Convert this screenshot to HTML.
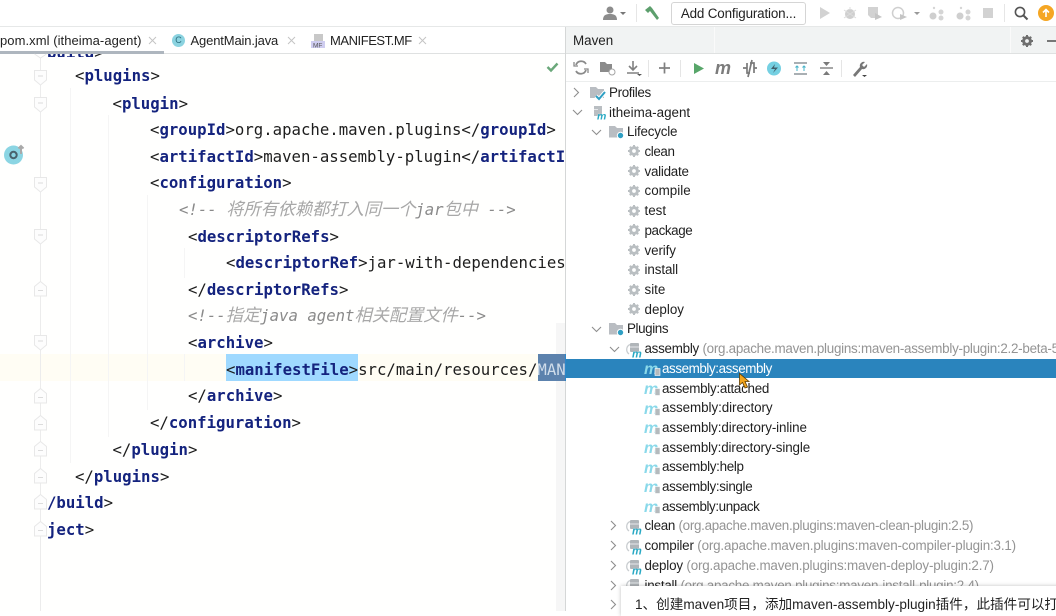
<!DOCTYPE html>
<html><head><meta charset="utf-8">
<style>
html,body{margin:0;padding:0}
body{width:1056px;height:611px;overflow:hidden;position:relative;background:#fff;font-family:"Liberation Sans","Noto Sans CJK SC",sans-serif;color:#222}
.a{position:absolute}
.c{position:absolute;font-family:"DejaVu Sans Mono","Noto Sans CJK SC",monospace;font-size:15.68px;line-height:26px;height:26px;white-space:pre;color:#1d1d1d;width:auto}
.c b{color:#14237e;font-weight:700}
.k{color:#8a8a8a!important;font-style:italic}
.k i{font-size:17.2px;color:#a8a8a8;font-style:italic}
.t{position:absolute;font-size:13.4px;line-height:20px;height:20px;white-space:pre;color:#1f1f1f}
.t span{color:#949494}
.x{position:absolute;font-size:13px;line-height:20px;height:20px;white-space:pre;color:#222}
.g{position:absolute;width:1px;background:#f5f5f5}
svg{position:absolute;overflow:visible}
</style></head><body>
<svg width="0" height="0" style="position:absolute"><defs>
<g id="fo"><path d="M0.5 0.5H12.5V10L6.5 15L0.5 10Z" fill="#fdfdfd" stroke="#e8e8e8"/><path d="M4 6H9" stroke="#dcdcdc"/></g>
<g id="fc"><path d="M0.5 15V5.500L6.500 0.500L12.500 5.500V15Z" fill="#fdfdfd" stroke="#e8e8e8"/><path d="M4 9.500H9" stroke="#dcdcdc"/></g>
<g id="gear"><circle cx="6" cy="6" r="3.400" fill="none" stroke="#babfc2" stroke-width="3"/><path d="M6 0V2.500M6 9.500V12M0 6H2.500M9.500 6H12M1.800 1.800L3.300 3.300M8.700 8.700L10.200 10.200M1.800 10.200L3.300 8.700M8.700 3.300L10.200 1.800" stroke="#babfc2" stroke-width="2"/></g>
<g id="goal"><text x="-1" y="12" font-family="Liberation Sans" font-size="16" font-style="italic" font-weight="700" fill="#8ad9ea">m</text><rect x="10" y="6.500" width="5" height="7" fill="#b4babd" stroke="#fff" stroke-width=".6"/></g>
<g id="plug"><path d="M3 2.500A5.500 5.500 0 0 0 2 12" fill="none" stroke="#c9cdd0" stroke-width="1.300"/><rect x="3" y="1" width="9" height="9" rx="1" fill="#b0b5b9"/><path d="M3 5H12" stroke="#e6e8ea"/><text x="5" y="15.500" font-family="Liberation Sans" font-size="11" font-style="italic" font-weight="700" fill="#29a9c4" stroke="#fff" stroke-width=".3" paint-order="stroke">m</text></g>
<path id="ar" d="M0 0L4.500 4.500L0 9" fill="none" stroke="#8e8e8e" stroke-width="1.100"/>
<path id="dn" d="M0 0L4.500 4.500L9 0" fill="none" stroke="#8e8e8e" stroke-width="1.100"/>
<g id="folder"><path d="M0 1H6L8 3H14V12.500H0Z" fill="#b9bdc2"/><circle cx="11.500" cy="10.500" r="3.200" fill="#2f9fc3" stroke="#fff"/></g>
</defs></svg>

<!-- top bar -->
<div class="a" style="left:0;top:26px;width:1056px;height:1px;background:#e6e8e8"></div>
<div class="a" style="left:0;top:53px;width:566px;height:1px;background:#dfe1e1"></div>
<!-- tabs -->
<div class="x" style="left:0;top:31px;letter-spacing:.06px">pom.xml (itheima-agent)</div>
<svg style="left:148px;top:36px" width="9" height="9"><path d="M1 1L8 8M8 1L1 8" stroke="#c4c4c4"/></svg>
<div class="a" style="left:0;top:51px;width:164px;height:3px;background:#aeb6be"></div>
<div class="a" style="left:172px;top:34px;width:13px;height:13px;border-radius:50%;background:#8bd3e0;color:#2c6f80;font-size:9px;line-height:13px;text-align:center">C</div>
<div class="x" style="left:190.500px;top:31px;letter-spacing:-.14px">AgentMain.java</div>
<svg style="left:287px;top:36px" width="9" height="9"><path d="M1 1L8 8M8 1L1 8" stroke="#c4c4c4"/></svg>
<svg style="left:311px;top:33px" width="14" height="15"><path d="M3 1H12V9H3Z" fill="#c8c8c8"/><rect x="0" y="8" width="14" height="7" fill="#cfcdf0"/><text x="2" y="14.500" font-family="Liberation Sans" font-size="6.500" fill="#555">MF</text></svg>
<div class="x" style="left:330px;top:31px;letter-spacing:-.45px">MANIFEST.MF</div>
<svg style="left:418px;top:36px" width="9" height="9"><path d="M1 1L8 8M8 1L1 8" stroke="#c4c4c4"/></svg>

<!-- editor -->
<div class="a" style="left:0;top:54px;width:566px;height:557px;background:#fffffe"></div>
<div class="a" style="left:0;top:354px;width:566px;height:27px;background:#fffdf4"></div>
<div class="g" style="left:39.500px;top:54px;height:557px;background:#ececec"></div>
<div class="g" style="left:70px;top:88px;height:375px"></div>
<div class="g" style="left:108px;top:115px;height:322px"></div>
<div class="g" style="left:147px;top:195px;height:215px"></div>
<div class="g" style="left:184px;top:248px;height:30px"></div>
<div class="g" style="left:184px;top:354px;height:27px"></div>
<div class="a" style="left:225.500px;top:354px;width:132.500px;height:27px;background:#9fd9ff"></div>
<div class="a" style="left:556px;top:323px;width:10px;height:288px;background:#f6f6f6"></div>
<div class="a" style="left:538px;top:354px;width:27px;height:27px;background:#5c82ad"></div>
<div class="a" style="left:565px;top:354px;width:1px;height:27px;background:#2b86c9"></div>

<svg style="left:34px;top:54px" width="13" height="4"><path d="M0.500 0L6.500 4L12.500 0" fill="#fff" stroke="#e8e8e8"/></svg>
<svg style="left:34px;top:70px" width="13" height="15"><use href="#fo"/></svg>
<svg style="left:34px;top:97px" width="13" height="15"><use href="#fo"/></svg>
<svg style="left:34px;top:177px" width="13" height="15"><use href="#fo"/></svg>
<svg style="left:34px;top:229px" width="13" height="15"><use href="#fo"/></svg>
<svg style="left:34px;top:335px" width="13" height="15"><use href="#fo"/></svg>
<svg style="left:34px;top:281px" width="13" height="15"><use href="#fc"/></svg>
<svg style="left:34px;top:388px" width="13" height="15"><use href="#fc"/></svg>
<svg style="left:34px;top:414.500px" width="13" height="15"><use href="#fc"/></svg>
<svg style="left:34px;top:441px" width="13" height="15"><use href="#fc"/></svg>
<svg style="left:34px;top:467.500px" width="13" height="15"><use href="#fc"/></svg>
<svg style="left:34px;top:494px" width="13" height="15"><use href="#fc"/></svg>
<svg style="left:34px;top:520.500px" width="13" height="15"><use href="#fc"/></svg>

<div class="a" style="left:47px;top:54px;width:60px;height:3px;overflow:hidden"><div class="c" style="left:0;top:-14px"><b>build</b>&gt;</div></div>
<div class="c" style="left:75px;top:63px">&lt;<b>plugins</b>&gt;</div>
<div class="c" style="left:112.500px;top:91px">&lt;<b>plugin</b>&gt;</div>
<div class="c" style="left:150px;top:116.500px">&lt;<b>groupId</b>&gt;org.apache.maven.plugins&lt;/<b>groupId</b>&gt;</div>
<div class="c" style="left:150px;top:144px;width:416px;overflow:hidden">&lt;<b>artifactId</b>&gt;maven-assembly-plugin&lt;/<b>artifactId</b>&gt;</div>
<div class="c" style="left:150px;top:169.500px">&lt;<b>configuration</b>&gt;</div>
<div class="c k" style="left:179px;top:197px">&lt;!-- <i>将所有依赖都打入同一个</i>jar<i>包中</i> --&gt;</div>
<div class="c" style="left:188px;top:224px">&lt;<b>descriptorRefs</b>&gt;</div>
<div class="c" style="left:226px;top:249.500px;width:340px;overflow:hidden">&lt;<b>descriptorRef</b>&gt;jar-with-dependencies&lt;/</div>
<div class="c" style="left:188px;top:277px">&lt;/<b>descriptorRefs</b>&gt;</div>
<div class="c k" style="left:188px;top:303px">&lt;!--<i>指定</i>java agent<i>相关配置文件</i>--&gt;</div>
<div class="c" style="left:188px;top:329.500px">&lt;<b>archive</b>&gt;</div>
<div class="c" style="left:226px;top:357px;width:340px;overflow:hidden">&lt;<b>manifestFile</b>&gt;src/main/resources/<span style="color:#cfdcea">MAN</span></div>
<div class="c" style="left:188px;top:382.500px">&lt;/<b>archive</b>&gt;</div>
<div class="c" style="left:150px;top:410px">&lt;/<b>configuration</b>&gt;</div>
<div class="c" style="left:112.500px;top:437px">&lt;/<b>plugin</b>&gt;</div>
<div class="c" style="left:75px;top:464px">&lt;/<b>plugins</b>&gt;</div>
<div class="c" style="left:47px;top:490px"><b>/build</b>&gt;</div>
<div class="c" style="left:47px;top:517px"><b>ject</b>&gt;</div>

<svg style="left:546px;top:62px" width="13" height="10"><path d="M1.500 5L5 8.500L11.500 1.500" fill="none" stroke="#6aa87a" stroke-width="2.400"/></svg>
<svg style="left:3px;top:144px" width="22" height="22"><circle cx="10.500" cy="11" r="9.500" fill="#8bd5e3"/><circle cx="10.500" cy="11" r="3.200" fill="none" stroke="#48626c" stroke-width="2"/><path d="M18 10V2M15.500 4.500L18 2L20.500 4.500" stroke="#a9a9a9" stroke-width="2" fill="none"/></svg>

<!-- divider -->
<div class="a" style="left:565px;top:27px;width:1px;height:327px;background:#d5d7d7"></div>
<div class="a" style="left:565px;top:381px;width:1px;height:230px;background:#d5d7d7"></div>

<!-- maven header -->
<div class="a" style="left:566px;top:27px;width:490px;height:26px;background:#f1f3f3;border-bottom:1px solid #dfe1e1"></div>
<div class="a" style="left:714px;top:27px;width:1px;height:26px;background:#fafafa"></div>
<div class="a" style="left:1010px;top:27px;width:1px;height:26px;background:#fafafa"></div>
<div class="t" style="left:573px;top:31px">Maven</div>
<svg style="left:1021px;top:35px" width="12" height="12"><circle cx="6" cy="6" r="3.400" fill="none" stroke="#6f6f6f" stroke-width="3"/><path d="M6 0V2.500M6 9.500V12M0 6H2.500M9.500 6H12M1.800 1.800L3.300 3.300M8.700 8.700L10.200 10.200M1.800 10.200L3.300 8.700M8.700 3.300L10.200 1.800" stroke="#6f6f6f" stroke-width="2"/></svg>
<div class="a" style="left:1047px;top:40px;width:9px;height:2px;background:#777"></div>

<!-- top toolbar -->
<svg style="left:603px;top:6px" width="24" height="15"><circle cx="7" cy="4" r="3.500" fill="#8c8c8c"/><path d="M0 14C0 9 3 8 7 8S14 9 14 14Z" fill="#8c8c8c"/><path d="M17 6H23L20 9Z" fill="#777"/></svg>
<div class="a" style="left:636px;top:4px;width:1px;height:18px;background:#e6e6e6"></div>
<svg style="left:644px;top:5px" width="16" height="15"><path d="M1 5L6 1L8 3L15 13L13 15L6 6L4 8Z" fill="#5d9f6d"/></svg>
<div class="a" style="left:671px;top:2px;width:133px;height:21px;border:1px solid #d5d5d5;border-radius:3px;font-size:13.400px;letter-spacing:-.15px;line-height:21px;text-align:center;color:#222">Add Configuration...</div>
<svg style="left:819px;top:6px" width="180" height="15">
<path d="M1 1L11 7L1 13Z" fill="#d2d2d2"/>
<circle cx="31" cy="8" r="5" fill="#cfcfcf"/><path d="M25 4L37 12M37 4L25 12M31 1V4" stroke="#dcdcdc"/>
<path d="M49 1H59V12H52L49 9Z" fill="#d2d2d2"/><path d="M56 7L63 11L56 14Z" fill="#c5c5c5"/>
<circle cx="79" cy="7" r="5.500" fill="none" stroke="#cfcfcf" stroke-width="1.500"/><path d="M81 8L88 11L81 14Z" fill="#c5c5c5"/><path d="M95 6H101L98 9Z" fill="#999"/>
<circle cx="114" cy="10" r="3.500" fill="#cfcfcf"/><circle cx="122" cy="6" r="2.500" fill="#d5d5d5"/><circle cx="122" cy="12" r="2.500" fill="#d5d5d5"/><circle cx="115" cy="2" r="1.200" fill="#d5d5d5"/>
<circle cx="141" cy="10" r="3.500" fill="#cfcfcf"/><circle cx="149" cy="6" r="2.500" fill="#d5d5d5"/><circle cx="149" cy="12" r="2.500" fill="#d5d5d5"/><circle cx="142" cy="2" r="1.200" fill="#d5d5d5"/>
<rect x="164" y="2" width="10" height="10" fill="#d2d2d2"/></svg>
<div class="a" style="left:1004px;top:4px;width:1px;height:18px;background:#e6e6e6"></div>
<svg style="left:1014px;top:6px" width="15" height="15"><circle cx="6" cy="6" r="4.600" fill="none" stroke="#555" stroke-width="1.600"/><path d="M9.500 9.500L13.500 13.500" stroke="#555" stroke-width="2"/></svg>
<svg style="left:1038px;top:5px" width="16" height="16"><circle cx="8" cy="8" r="8" fill="#f5a623"/><path d="M8 12V5M5 7.500L8 4.500L11 7.500" stroke="#fff" stroke-width="1.600" fill="none"/></svg>

<!-- maven toolbar -->
<div class="a" style="left:566px;top:81px;width:490px;height:1px;background:#eceeee"></div>
<svg style="left:566px;top:56px" width="320" height="24">
<path d="M20 8A5.500 5.500 0 0 0 10 9M10 15A5.500 5.500 0 0 0 20 14" fill="none" stroke="#8a8a8a" stroke-width="1.800"/><path d="M8 6V10H12M22 17V13H18" fill="none" stroke="#8a8a8a" stroke-width="1.300"/>
<path d="M34 6H39L41 8H46V16H34Z" fill="#8b8b8b"/><circle cx="46" cy="16" r="3" fill="#fff" stroke="#a5a5a5"/>
<path d="M67 5V14M63 10L67 14L71 10M61 17H73" fill="none" stroke="#808080" stroke-width="1.600"/><path d="M71 18H76L73.500 20Z" fill="#555"/>
<rect x="82" y="4" width="1" height="17" fill="#e5e5e5"/>
<path d="M93 12H104M98.500 6.500V17.500" stroke="#808080" stroke-width="1.700"/>
<rect x="114" y="4" width="1" height="17" fill="#e5e5e5"/>
<path d="M128 7L138 12.500L128 18Z" fill="#58a66a"/>
<text x="149" y="18" font-family="Liberation Sans" font-size="18" font-style="italic" font-weight="700" fill="#7c7c7c">m</text>
<path d="M177 12H181M181 7V17H184M184 7H188V17M188 12H191M186 4L182 21" fill="none" stroke="#7a7a7a" stroke-width="1.700"/>
<circle cx="208" cy="12.500" r="7" fill="#75d0e2"/><path d="M209 8L205 13H209L207 17L212 11.500H208Z" fill="#3f5f6b"/>
<path d="M228 6H241V8H228ZM228 17H241V19H228Z" fill="#a9afb3"/><path d="M231 15V10M229.500 11.500L231 10L232.500 11.500M238 15V10M236.500 11.500L238 10L239.500 11.500" stroke="#46b3c9" fill="none"/>
<path d="M254 12H267" stroke="#888" stroke-width="1.500"/><path d="M257 6H264L260.500 10ZM257 19H264L260.500 15Z" fill="#7a7a7a"/>
<rect x="275" y="4" width="1" height="17" fill="#e5e5e5"/>
<path d="M287 19L294 11A4 4 0 0 1 299 6L296 9L298 11L301 8A4 4 0 0 1 296 13L289 21Z" fill="#777"/><path d="M296 19H301L298.500 21Z" fill="#444"/>
</svg>

<!-- tree -->
<div class="a" style="left:566px;top:358.500px;width:490px;height:19.500px;background:#2a84bd"></div>

<svg style="left:574px;top:87.500px" width="5" height="9"><use href="#ar"/></svg>
<svg style="left:590px;top:86px" width="15" height="14"><path d="M0 1H6L8 3H14V12H0Z" fill="#b9bdc2"/><path d="M6 10L9 13L15 6" stroke="#fff" stroke-width="4" fill="none"/><path d="M6 10L9 13L15 6" stroke="#2f9fc3" stroke-width="2" fill="none"/></svg>
<div class="t" style="left:609px;top:83px;letter-spacing:-.35px">Profiles</div>

<svg style="left:573px;top:110px" width="9" height="5"><use href="#dn"/></svg>
<svg style="left:592px;top:105px" width="14" height="15"><rect x="2" y="1" width="8" height="10" fill="#b9bec2"/><rect x="2" y="4" width="4" height="1" fill="#e6e8ea"/><text x="5" y="14.500" font-family="Liberation Sans" font-size="10.500" font-style="italic" font-weight="700" fill="#29a9c4" stroke="#fff" stroke-width=".3" paint-order="stroke">m</text></svg>
<div class="t" style="left:609px;top:103px">itheima-agent</div>

<svg style="left:592px;top:129.500px" width="9" height="5"><use href="#dn"/></svg>
<svg style="left:609px;top:125px" width="15" height="15"><use href="#folder"/></svg>
<div class="t" style="left:627px;top:121.500px;letter-spacing:-.2px">Lifecycle</div>

<svg style="left:628px;top:145px" width="12" height="12"><use href="#gear"/></svg><div class="t" style="left:644.500px;top:142px;letter-spacing:-.4px">clean</div>
<svg style="left:628px;top:165px" width="12" height="12"><use href="#gear"/></svg><div class="t" style="left:644.500px;top:162px;letter-spacing:-.25px">validate</div>
<svg style="left:628px;top:185px" width="12" height="12"><use href="#gear"/></svg><div class="t" style="left:644.500px;top:181px">compile</div>
<svg style="left:628px;top:204.500px" width="12" height="12"><use href="#gear"/></svg><div class="t" style="left:644.500px;top:201px">test</div>
<svg style="left:628px;top:224px" width="12" height="12"><use href="#gear"/></svg><div class="t" style="left:644.500px;top:221px;letter-spacing:-.4px">package</div>
<svg style="left:628px;top:244px" width="12" height="12"><use href="#gear"/></svg><div class="t" style="left:644.500px;top:241px;letter-spacing:-.1px">verify</div>
<svg style="left:628px;top:264px" width="12" height="12"><use href="#gear"/></svg><div class="t" style="left:644.500px;top:260px;letter-spacing:-.1px">install</div>
<svg style="left:628px;top:283.500px" width="12" height="12"><use href="#gear"/></svg><div class="t" style="left:644.500px;top:280px">site</div>
<svg style="left:628px;top:303px" width="12" height="12"><use href="#gear"/></svg><div class="t" style="left:644.500px;top:300px">deploy</div>

<svg style="left:592px;top:326.500px" width="9" height="5"><use href="#dn"/></svg>
<svg style="left:609px;top:322px" width="15" height="15"><use href="#folder"/></svg>
<div class="t" style="left:627px;top:319px;letter-spacing:-.4px">Plugins</div>

<svg style="left:610px;top:346.500px" width="9" height="5"><use href="#dn"/></svg>
<svg style="left:627px;top:342px" width="15" height="15"><use href="#plug"/></svg>
<div class="t" style="left:644.500px;top:339px;letter-spacing:-.26px">assembly <span>(org.apache.maven.plugins:maven-assembly-plugin:2.2-beta-5)</span></div>

<svg style="left:645px;top:362px" width="15" height="14"><use href="#goal"/></svg><div class="t" style="left:662px;top:358.500px;color:#fff;letter-spacing:-.41px">assembly:assembly</div>
<svg style="left:645px;top:381.500px" width="15" height="14"><use href="#goal"/></svg><div class="t" style="left:662px;top:379px;letter-spacing:-.27px">assembly:attached</div>
<svg style="left:645px;top:401.500px" width="15" height="14"><use href="#goal"/></svg><div class="t" style="left:662px;top:398px;letter-spacing:-.06px">assembly:directory</div>
<svg style="left:645px;top:421px" width="15" height="14"><use href="#goal"/></svg><div class="t" style="left:662px;top:418px;letter-spacing:-.1px">assembly:directory-inline</div>
<svg style="left:645px;top:441px" width="15" height="14"><use href="#goal"/></svg><div class="t" style="left:662px;top:438px;letter-spacing:-.12px">assembly:directory-single</div>
<svg style="left:645px;top:460.500px" width="15" height="14"><use href="#goal"/></svg><div class="t" style="left:662px;top:457px;letter-spacing:-.3px">assembly:help</div>
<svg style="left:645px;top:480px" width="15" height="14"><use href="#goal"/></svg><div class="t" style="left:662px;top:477px;letter-spacing:-.33px">assembly:single</div>
<svg style="left:645px;top:500px" width="15" height="14"><use href="#goal"/></svg><div class="t" style="left:662px;top:497px;letter-spacing:-.4px">assembly:unpack</div>

<svg style="left:611px;top:521px" width="5" height="9"><use href="#ar"/></svg>
<svg style="left:627px;top:519px" width="15" height="15"><use href="#plug"/></svg>
<div class="t" style="left:644.500px;top:516px;letter-spacing:-.29px">clean <span>(org.apache.maven.plugins:maven-clean-plugin:2.5)</span></div>
<svg style="left:611px;top:541px" width="5" height="9"><use href="#ar"/></svg>
<svg style="left:627px;top:539px" width="15" height="15"><use href="#plug"/></svg>
<div class="t" style="left:644.500px;top:536px;letter-spacing:-.17px">compiler <span>(org.apache.maven.plugins:maven-compiler-plugin:3.1)</span></div>
<svg style="left:611px;top:560.500px" width="5" height="9"><use href="#ar"/></svg>
<svg style="left:627px;top:558.500px" width="15" height="15"><use href="#plug"/></svg>
<div class="t" style="left:644.500px;top:556px;letter-spacing:-.18px">deploy <span>(org.apache.maven.plugins:maven-deploy-plugin:2.7)</span></div>
<svg style="left:611px;top:580.500px" width="5" height="9"><use href="#ar"/></svg>
<svg style="left:627px;top:578px" width="15" height="15"><use href="#plug"/></svg>
<div class="t" style="left:644.500px;top:576px;letter-spacing:-.25px">install <span>(org.apache.maven.plugins:maven-install-plugin:2.4)</span></div>
<svg style="left:611px;top:600px" width="5" height="9"><use href="#ar"/></svg>

<!-- cursor -->
<svg style="left:739px;top:373px" width="11" height="16"><path d="M0.500 0.500V12L3.500 9.500L6 15L8.500 14L6 8.500H10Z" fill="#f2a51e" stroke="#5a3a00" stroke-width=".8"/></svg>

<!-- subtitle popup -->
<div class="a" style="left:621px;top:586px;width:440px;height:30px;background:#fff;box-shadow:0 0 4px rgba(0,0,0,.25);overflow:hidden;white-space:nowrap;font-size:13.600px;line-height:37px;padding-left:14px;color:#222;box-sizing:border-box">1、创建maven项目，添加maven-assembly-plugin插件，此插件可以打包</div>
</body></html>
